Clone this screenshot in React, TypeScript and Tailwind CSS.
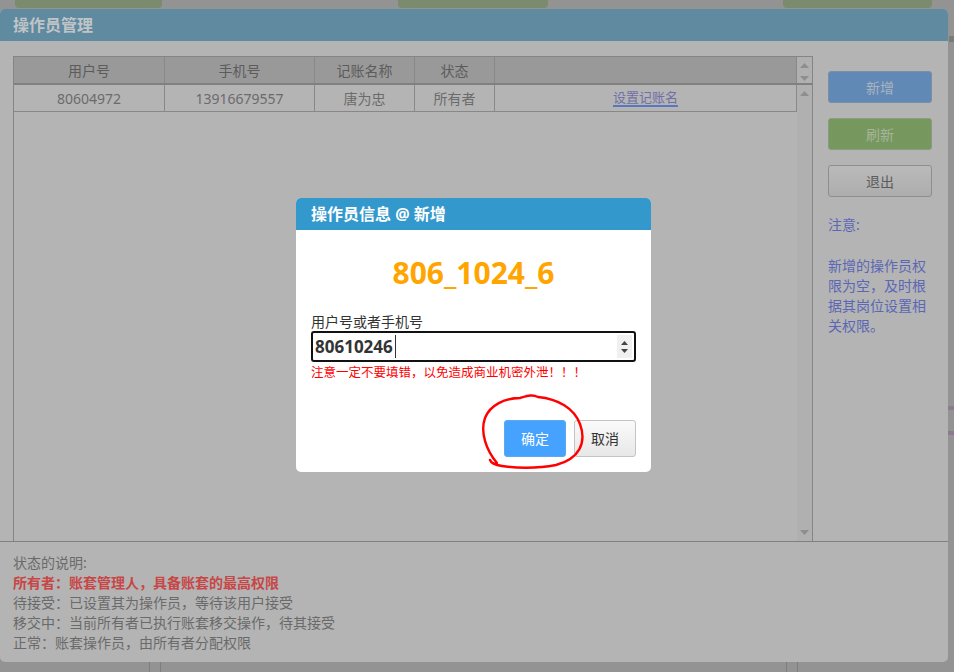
import { ReactNode } from "react";

const columns = [
    { title: "用户号", w: "w-[151px]" },
    { title: "手机号", w: "w-[150px]" },
    { title: "记账名称", w: "w-[100px]" },
    { title: "状态", w: "w-[80px]" },
    { title: "", w: "flex-1" },
];

function Tri({ up }: { up?: boolean }) {
    return (
        <svg width="9" height="5" viewBox="0 0 9 5" className="block">
            {up ? <path d="M0 5 L4.5 0 L9 5 Z" fill="#8e8e8e" /> : <path d="M0 0 L4.5 5 L9 0 Z" fill="#8e8e8e" />}
        </svg>
    );
}

function SideButton({ children, className }: { children: ReactNode; className: string }) {
    return (
        <div className={"w-[104px] h-[32px] rounded-[3px] border flex items-center justify-center text-[14px] " + className}>
            {children}
        </div>
    );
}

function ConfirmCircle() {
    return (
        <svg
            className="absolute left-[478px] top-[390px] pointer-events-none"
            width="112"
            height="84"
            viewBox="478 390 112 84"
        >
            <path
                d="M 497 463 C 486 450, 480 432, 485 418 C 490 405, 505 398, 520 398 C 527 396, 532 394, 538 397 C 558 399, 574 408, 580 424 C 587 443, 579 459, 556 465 C 536 469, 514 468, 502 466 C 496 465, 491 463, 490 460"
                fill="none"
                stroke="#ff0000"
                strokeWidth="2.4"
                strokeLinecap="round"
            />
        </svg>
    );
}

export default function App() {
    return (
        <div className="relative w-[954px] h-[672px] overflow-hidden bg-[#939393] font-['Noto_Sans','Noto_Sans_CJK_SC',sans-serif]">
            {/* buttons of the page behind, peeking above the window */}
            <div className="absolute left-0 top-0 w-full h-[9px]">
                <div className="absolute left-[15px] top-[-4px] w-[147px] h-[12px] rounded-b-[4px] bg-[#7b8b6d]" />
                <div className="absolute left-[398px] top-[-4px] w-[150px] h-[12px] rounded-b-[4px] bg-[#7b8b6d]" />
                <div className="absolute left-[783px] top-[-4px] w-[149px] h-[12px] rounded-b-[4px] bg-[#7b8b6d]" />
            </div>
            <div className="absolute right-0 top-[36px] w-[5px] h-[6px] bg-[#7a7a7a]" />
            <div className="absolute right-0 top-[406px] w-[6px] h-[4px] bg-[#8c7b8c]" />
            <div className="absolute right-0 top-[431px] w-[6px] h-[4px] bg-[#8c7b8c]" />
            <div className="absolute left-[149px] top-[662px] w-px h-[10px] bg-[#7d7d7d]" />
            <div className="absolute left-[160px] top-[662px] w-px h-[10px] bg-[#7d7d7d]" />
            <div className="absolute left-[786px] top-[662px] w-px h-[10px] bg-[#7d7d7d]" />
            <div className="absolute left-[797px] top-[662px] w-px h-[10px] bg-[#7d7d7d]" />

            <div className="pt-[9px] w-[948px]">
                <div className="flex flex-col h-[653px] rounded-[5px] overflow-hidden bg-[#b4b4b4]">
                    <div className="h-[32px] shrink-0 bg-[#5f8aa0] flex items-center px-[13px]">
                        <span className="text-[16px] font-bold text-[#bfc4c7]">操作员管理</span>
                    </div>

                    <div className="h-[500px] shrink-0 flex pl-[13px] pt-[15px]">
                        <div className="w-[800px] h-[485px] border-l border-t border-r border-[#858585] flex flex-col">
                            <div className="flex h-[28px] border-b-2 border-[#808080] bg-[#999999]">
                                {columns.map((c, i) => (
                                    <div
                                        key={i}
                                        className={c.w + " h-full border-r border-[#888888] flex items-center justify-center text-[14px] text-[#5c5c5c]"}
                                    >
                                        {c.title}
                                    </div>
                                ))}
                                <div className="w-[15px] bg-[#b0b0b0] flex flex-col items-center pt-[6px] gap-[8px]">
                                    <Tri up />
                                    <Tri />
                                </div>
                            </div>
                            <div className="flex flex-1">
                                <div className="flex-1">
                                    <div className="flex h-[27px] border-b border-r border-[#888888] text-[14px] text-[#6b6b6b]">
                                        <div className="w-[151px] border-r border-[#888888] flex items-center justify-center">80604972</div>
                                        <div className="w-[150px] border-r border-[#888888] flex items-center justify-center">13916679557</div>
                                        <div className="w-[100px] border-r border-[#888888] flex items-center justify-center">唐为忠</div>
                                        <div className="w-[80px] border-r border-[#888888] flex items-center justify-center">所有者</div>
                                        <div className="flex-1 flex items-center justify-center">
                                            <span className="text-[13px] text-[#7070a8] underline decoration-[#5a78c0] decoration-2 underline-offset-[3px]">设置记账名</span>
                                        </div>
                                    </div>
                                </div>
                                <div className="w-[15px] bg-[#b0b0b0] flex flex-col items-center justify-between pt-[6px] pb-[6px]">
                                    <Tri up />
                                    <Tri />
                                </div>
                            </div>
                        </div>

                        <div className="ml-[15px] pt-[15px] flex flex-col gap-[15px]">
                            <SideButton className="bg-[#6189b5] border-[#7b8ea6] text-[#a9b3c0]">新增</SideButton>
                            <SideButton className="bg-[#76985f] border-[#8a9c80] text-[#a6b59a]">刷新</SideButton>
                            <SideButton className="bg-gradient-to-b from-[#bababa] to-[#adadad] border-[#8e8e8e] text-[#5c5c5c]">退出</SideButton>
                            <div className="w-[104px] text-[14px] leading-[20px] text-[#5b67b5] mt-[3px]">
                                <p>注意:</p>
                                <p className="mt-[21px]">新增的操作员权限为空，及时根据其岗位设置相关权限。</p>
                            </div>
                        </div>
                    </div>

                    <div className="flex-1 border-t border-[#808080] pl-[13px] pt-[11px] text-[14px] leading-[20px] text-[#6a6a6a]">
                        <p>状态的说明:</p>
                        <p className="font-bold text-[#c84646]">所有者：账套管理人，具备账套的最高权限</p>
                        <p>待接受：已设置其为操作员，等待该用户接受</p>
                        <p>移交中：当前所有者已执行账套移交操作，待其接受</p>
                        <p>正常：账套操作员，由所有者分配权限</p>
                    </div>
                </div>
            </div>

            {/* modal dialog */}
            <div className="absolute left-[296px] top-[198px] w-[355px] h-[274px] rounded-[5px] overflow-hidden bg-white flex flex-col">
                <div className="h-[32px] shrink-0 bg-[#3398cc] flex items-center px-[15px]">
                    <span className="text-[16px] font-bold text-white">操作员信息 @ 新增</span>
                </div>
                <div className="px-[15px] pt-[24px] pb-[15px] flex flex-col">
                    <div className="text-center text-[30px] leading-[38px] font-bold text-[#ffa500]">806_1024_6</div>
                    <div className="mt-[21px] text-[14px] leading-[18px] text-[#333333]">用户号或者手机号</div>
                    <div className="h-[31px] border-2 border-[#111111] rounded-[3px] flex items-center pl-[2px] pr-[2px]">
                        <span className="text-[17px] font-bold text-[#333333] leading-none">80610246</span>
                        <span className="w-px h-[23px] bg-[#333333] ml-[2px]" />
                        <div className="ml-auto w-[15px] h-[23px] bg-[#f0f0f0] flex flex-col items-center justify-center gap-[4px]">
                            <svg width="7" height="4" viewBox="0 0 7 4"><path d="M0 4 L3.5 0 L7 4 Z" fill="#444" /></svg>
                            <svg width="7" height="4" viewBox="0 0 7 4"><path d="M0 0 L3.5 4 L7 0 Z" fill="#444" /></svg>
                        </div>
                    </div>
                    <div className="mt-[2px] text-[12.5px] leading-[18px] text-[#ff0000]">注意一定不要填错，以免造成商业机密外泄！！！</div>
                    <div className="mt-[38px] flex justify-end gap-[8px]">
                        <div className="w-[62px] h-[37px] rounded-[3px] bg-[#45a2ff] border border-[#5aa8f0] flex items-center justify-center text-[14px] text-white">确定</div>
                        <div className="w-[62px] h-[37px] rounded-[3px] bg-gradient-to-b from-[#fafafa] to-[#e8e8e8] border border-[#c4c4c4] flex items-center justify-center text-[14px] text-[#333333]">取消</div>
                    </div>
                </div>
            </div>

            <ConfirmCircle />
        </div>
    );
}
